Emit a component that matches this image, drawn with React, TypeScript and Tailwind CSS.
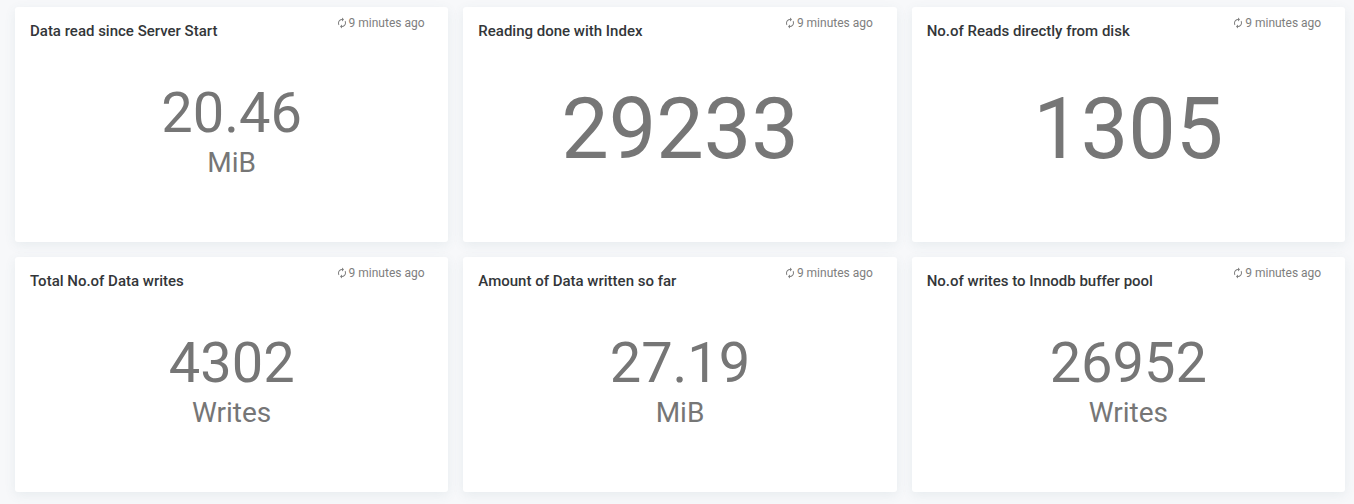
import React from "react";
import { MdAutorenew } from "react-icons/md";

type Card = { title: string; value: string; unit?: string };

const cards: Card[] = [
  { title: "Data read since Server Start", value: "20.46", unit: "MiB" },
  { title: "Reading done with Index", value: "29233" },
  { title: "No.of Reads directly from disk", value: "1305" },
  { title: "Total No.of Data writes", value: "4302", unit: "Writes" },
  { title: "Amount of Data written so far", value: "27.19", unit: "MiB" },
  { title: "No.of writes to Innodb buffer pool", value: "26952", unit: "Writes" },
];

function StatCard({ title, value, unit }: Card) {
  return (
    <section className="flex h-[235px] flex-col rounded-[3px] bg-white shadow-[0_3px_12px_rgba(69,115,125,0.09)]">
      <header className="flex h-[50px] items-start justify-between pl-[15px] pr-[23.8px]">
        <h2 className="pt-[14px] text-[15px] font-medium leading-5 text-[#333639]">{title}</h2>
        <span className="flex items-center gap-px pt-2 text-[12px] leading-4 text-[#7e7e7e]">
          <MdAutorenew className="size-3" />
          9 minutes ago
        </span>
      </header>
      {unit ? (
        <div className="flex flex-col items-center pt-[23px] text-[#767676]">
          <span className="text-[56px] leading-[66px]">{value}</span>
          <span className="text-[28px] leading-[34px]">{unit}</span>
        </div>
      ) : (
        <div className="flex justify-center pt-[23px] text-[#767676]">
          <span className="text-[84.6px] leading-[100px]">{value}</span>
        </div>
      )}
    </section>
  );
}

export default function App() {
  return (
    <main className="grid h-[504px] grid-cols-3 content-start gap-[15px] overflow-hidden bg-[#f7f8fa] pl-[15px] pr-[9px] pt-[7px] font-['Roboto',sans-serif]">
      {cards.map((c) => (
        <StatCard key={c.title} {...c} />
      ))}
    </main>
  );
}
